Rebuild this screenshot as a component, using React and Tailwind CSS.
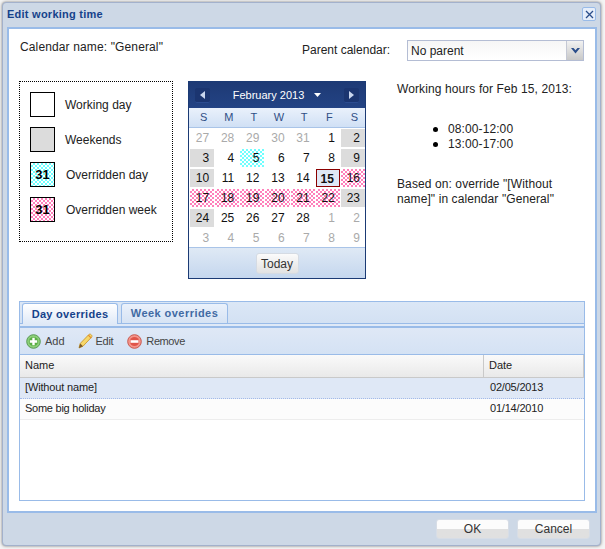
const FONT = "font-['Liberation_Sans',Arial,sans-serif]";
const PINK = "bg-[repeating-conic-gradient(#ff80bb_0_25%,#ffffff_0_50%)] bg-[length:4px_4px]";
const CYAN = "bg-[repeating-conic-gradient(#70ffff_0_25%,#ffffff_0_50%)] bg-[length:4px_4px]";

const days = [
  ["27","o"],["28","o"],["29","o"],["30","o"],["31","o"],["1",""],["2","w"],
  ["3","w"],["4",""],["5","c"],["6",""],["7",""],["8",""],["9","w"],
  ["10","w"],["11",""],["12",""],["13",""],["14",""],["15","s"],["16","p"],
  ["17","p"],["18","p"],["19","p"],["20","p"],["21","p"],["22","p"],["23","w"],
  ["24","w"],["25",""],["26",""],["27",""],["28",""],["1","o"],["2","o"],
  ["3","o"],["4","o"],["5","o"],["6","o"],["7","o"],["8","o"],["9","o"],
];
const dayStyle = {
  "": "text-[#111]",
  o: "text-[#aaaaaa]",
  w: "bg-[#dcdcdc] text-[#111]",
  c: `${CYAN} text-[#111]`,
  p: `${PINK} text-[#111]`,
  s: "bg-[#dfe8f6] border border-[#8b0000] font-bold text-[#111] pr-[4px] leading-[16px]",
};

function Swatch({ kind }) {
  const bg = kind === "w" ? "bg-white" : kind === "g" ? "bg-[#dcdcdc]" : kind === "c" ? CYAN : PINK;
  return (
    <div className={`w-[25px] h-[25px] border border-black flex items-center justify-center text-[13px] font-bold text-black ${bg}`}>
      {kind === "c" || kind === "p" ? "31" : ""}
    </div>
  );
}

function LegendRow({ kind, label, ml }) {
  return (
    <div className="flex items-center h-[25px]">
      <Swatch kind={kind} />
      <span className={`${ml} text-[12px] text-[#222]`}>{label}</span>
    </div>
  );
}

function Nav({ dir }) {
  return (
    <div className="w-[15px] h-[15px] rounded-[2px] bg-[#1b3570] border-b border-[#2c4c90] flex items-center justify-center">
      <svg width="6" height="8" viewBox="0 0 6 8">
        <path d={dir === "l" ? "M5 0v8L0 4z" : "M1 0v8l5-4z"} fill="#c9d6ee" />
      </svg>
    </div>
  );
}

function Calendar() {
  return (
    <div className="ml-[15px] w-[178px] h-[198px] border border-[#1b3a74] flex flex-col bg-white shrink-0">
      <div className="h-[26px] bg-gradient-to-b from-[#1e3a75] to-[#234384] flex items-center justify-between px-[6px]">
        <Nav dir="l" />
        <div className="flex items-center text-white text-[11px]">
          <span>February 2013</span>
          <svg className="ml-[10px]" width="7" height="4" viewBox="0 0 7 4"><path d="M0 0h7L3.5 4z" fill="#fff" /></svg>
        </div>
        <Nav dir="r" />
      </div>
      <div className="h-[20px] bg-gradient-to-b from-[#eaf1fb] to-[#d0e0f5] border-b border-[#a9c4e8] grid grid-cols-7 gap-x-px pl-px items-center">
        {["S","M","T","W","T","F","S"].map((d, i) => (
          <div key={i} className="text-center text-[11px] text-[#2f4f86] pl-[3px]">{d}</div>
        ))}
      </div>
      <div className="grid grid-cols-7 gap-x-px gap-y-[2px] pl-px pt-px h-[119px]">
        {days.map(([n, k], i) => (
          <div key={i} className={`h-[18px] text-right pr-[5px] text-[12px] leading-[18px] ${dayStyle[k]}`}>{n}</div>
        ))}
      </div>
      <div className="flex-1 bg-gradient-to-b from-[#dfe9f5] to-[#c5d7ee] border-t border-[#a9c4e8] flex items-center justify-center">
        <button className="w-[43px] h-[21px] rounded-[3px] border border-[#d5dbe3] bg-gradient-to-b from-[#fbfbfb] to-[#e2e2e2] text-[12px] leading-[21px] text-[#333]">Today</button>
      </div>
    </div>
  );
}

function Plus() {
  return (
    <svg width="15" height="15" viewBox="0 0 15 15">
      <circle cx="7.5" cy="7.5" r="6.8" fill="#8ccf78" stroke="#5a9a55" />
      <circle cx="7.5" cy="7.5" r="4.6" fill="#59ad43" />
      <path d="M6.300 3.800h2.400v2.500h2.500v2.400H8.700v2.500H6.300V8.700H3.800V6.300h2.500z" fill="#fff" />
    </svg>
  );
}
function Minus() {
  return (
    <svg width="15" height="15" viewBox="0 0 15 15">
      <circle cx="7.5" cy="7.5" r="6.8" fill="#f4958b" stroke="#c9584e" />
      <circle cx="7.5" cy="7.5" r="4.6" fill="#e0554a" />
      <rect x="3.500" y="6.200" width="8" height="2.600" fill="#fff" />
    </svg>
  );
}
function Pencil() {
  return (
    <svg width="15" height="16" viewBox="0 0 15 16">
      <path d="M1 15l1.200-4.500L10.800 1.600c.8-.7 1.700-.6 2.500.2s.9 1.700.2 2.400L5 13.200z" fill="#f7d769" stroke="#c99a2e" strokeWidth="0.9" />
      <path d="M10.300 2.200l3 3" stroke="#e58a2c" strokeWidth="1.200" />
      <path d="M1 15l1.200-4.500L5 13.200z" fill="#7a5a2c" />
    </svg>
  );
}

function Hour({ children }) {
  return (
    <li className="flex items-center gap-[10px]">
      <span className="w-[5px] h-[5px] rounded-full bg-black" />
      <span>{children}</span>
    </li>
  );
}

export default function App() {
  return (
    <div className={`${FONT} w-[605px] h-[549px] bg-[#f4f4f4] pt-[2px] pl-[2px] overflow-hidden`}>
      <div className="w-[599px] h-[544px] rounded-[4px] bg-[#cdd8e6] border border-[#a3b1cc] shadow-[0_0_3px_#777] flex flex-col pl-[4px] pr-[3px]">
        <div className="h-[24px] shrink-0 flex items-start justify-between pr-[1px]">
          <span className="text-[11px] font-bold text-[#15428b] leading-[22px] tracking-[0.25px]">Edit working time</span>
          <div className="w-[14px] h-[14px] mt-[4px] rounded-[2px] border border-[#99bbe8] bg-[#e6eefa] flex items-center justify-center">
            <svg width="9" height="9" viewBox="0 0 9 9"><path d="M1 1l7 7M8 1L1 8" stroke="#2a4d8a" strokeWidth="1.300" /></svg>
          </div>
        </div>
        <div className="w-[590px] h-[486px] shrink-0 border-2 border-[#99bbe8] bg-white flex flex-col text-[12px] text-[#222]">
          <div className="flex items-start pt-[11px] pl-[11px]">
            <span className="w-[282px] leading-[14px] tracking-[0.13px]">Calendar name: "General"</span>
            <span className="w-[105px] pt-[3px] leading-[14px]">Parent calendar:</span>
            <div className="w-[177px] h-[21px] border border-[#b4bdd4] flex bg-gradient-to-b from-[#f6f6f6] to-white">
              <span className="flex-1 pl-[3px] leading-[20px] text-[#222]">No parent</span>
              <div className="w-[17px] bg-gradient-to-b from-[#f2f2f2] to-[#c8c8c8] border-l border-[#c4c8d4] flex items-center justify-center">
                <svg width="9" height="6" viewBox="0 0 9 6"><path d="M0 0h2.500l2 2.200L6.500 0H9L4.500 5.500z" fill="#2a4d8a" /></svg>
              </div>
            </div>
          </div>

          <div className="flex items-start mt-[20px] pl-[10px]">
            <div className="w-[154px] h-[161px] border border-dotted border-black pt-[10px] pl-[10px] flex flex-col gap-[10px] shrink-0">
              <LegendRow kind="w" label="Working day" ml="ml-[10px]" />
              <LegendRow kind="g" label="Weekends" ml="ml-[10px]" />
              <LegendRow kind="c" label="Overridden day" ml="ml-[11px]" />
              <LegendRow kind="p" label="Overridden week" ml="ml-[11px]" />
            </div>
            <Calendar />
            <div className="ml-[31px] w-[180px] leading-[15px] pt-px tracking-[0.1px]">
              <div>Working hours for Feb 15, 2013:</div>
              <ul className="mt-[25px] pl-[36px]">
                <Hour>08:00-12:00</Hour>
                <Hour>13:00-17:00</Hour>
              </ul>
              <div className="mt-[25px] w-[165px]">Based on: override "[Without name]" in calendar "General"</div>
            </div>
          </div>

          <div className="ml-[10px] mt-[22px] w-[566px] h-[200px] border border-[#99bbe8] flex flex-col">
            <div className="h-[22px] shrink-0 bg-gradient-to-b from-[#dbe7f6] to-[#d3e1f3] border-b border-[#99bbe8] flex items-end pl-[2px] gap-[3px]">
              <div className="w-[96px] h-[21px] -mb-px rounded-t-[3px] border border-b-0 border-[#99bbe8] bg-gradient-to-b from-white to-[#dfe9f7] text-[#15428b] text-[11px] font-bold flex items-center justify-center tracking-[0.3px]">Day overrides</div>
              <div className="w-[107px] h-[20px] rounded-t-[3px] border border-b-0 border-[#99bbe8] bg-gradient-to-b from-[#eaf1fb] to-[#d6e3f4] text-[#416aa3] text-[11px] font-bold flex items-center justify-center tracking-[0.45px]">Week overrides</div>
            </div>
            <div className="h-[2px] shrink-0 bg-[#dfe9f7]" />
            <div className="h-[2px] shrink-0 bg-[#99bbe8]" />
            <div className="h-[27px] shrink-0 bg-gradient-to-b from-[#dfe8f6] to-[#d4e2f4] border-b border-[#99bbe8] flex items-center pl-[6px] text-[11px] text-[#444]">
              <Plus /><span className="ml-[4px]">Add</span>
              <span className="ml-[13px]"><Pencil /></span><span className="ml-[3px] tracking-[-0.3px]">Edit</span>
              <span className="ml-[14px]"><Minus /></span><span className="ml-[4px] tracking-[-0.4px]">Remove</span>
            </div>
            <div className="h-[23px] shrink-0 flex bg-gradient-to-b from-[#fafafa] to-[#e9e9e9] border-b border-[#c9c9c9] text-[11px] text-[#222] leading-[21px]">
              <div className="w-[464px] pl-[5px] border-r border-[#c9c9c9]">Name</div>
              <div className="flex-1 pl-[5px] border-r border-[#c9c9c9]">Date</div>
            </div>
            <div className="h-[21px] shrink-0 flex bg-[#dfe8f6] border-b border-dotted border-[#a3bae9] text-[11px] text-[#222] leading-[18px]">
              <div className="w-[464px] pl-[5px] tracking-[-0.15px]">[Without name]</div>
              <div className="flex-1 pl-[6px] tracking-[-0.2px]">02/05/2013</div>
            </div>
            <div className="h-[21px] shrink-0 flex bg-[#fcfcfc] border-b border-[#ededed] text-[11px] text-[#222] leading-[18px]">
              <div className="w-[464px] pl-[5px] tracking-[-0.25px]">Some big holiday</div>
              <div className="flex-1 pl-[6px] tracking-[-0.2px]">01/14/2010</div>
            </div>
          </div>
        </div>
        <div className="flex-1 flex items-start justify-end gap-[8px] pt-[6px] pr-[7px]">
          <button className="w-[73px] h-[20px] rounded-[3px] border border-[#d7dde6] bg-gradient-to-b from-[#fcfcfc] from-50% to-[#e0e0e0] to-50% text-[12px] text-[#333]">OK</button>
          <button className="w-[73px] h-[20px] rounded-[3px] border border-[#d7dde6] bg-gradient-to-b from-[#fcfcfc] from-50% to-[#e0e0e0] to-50% text-[12px] text-[#333]">Cancel</button>
        </div>
      </div>
    </div>
  );
}
